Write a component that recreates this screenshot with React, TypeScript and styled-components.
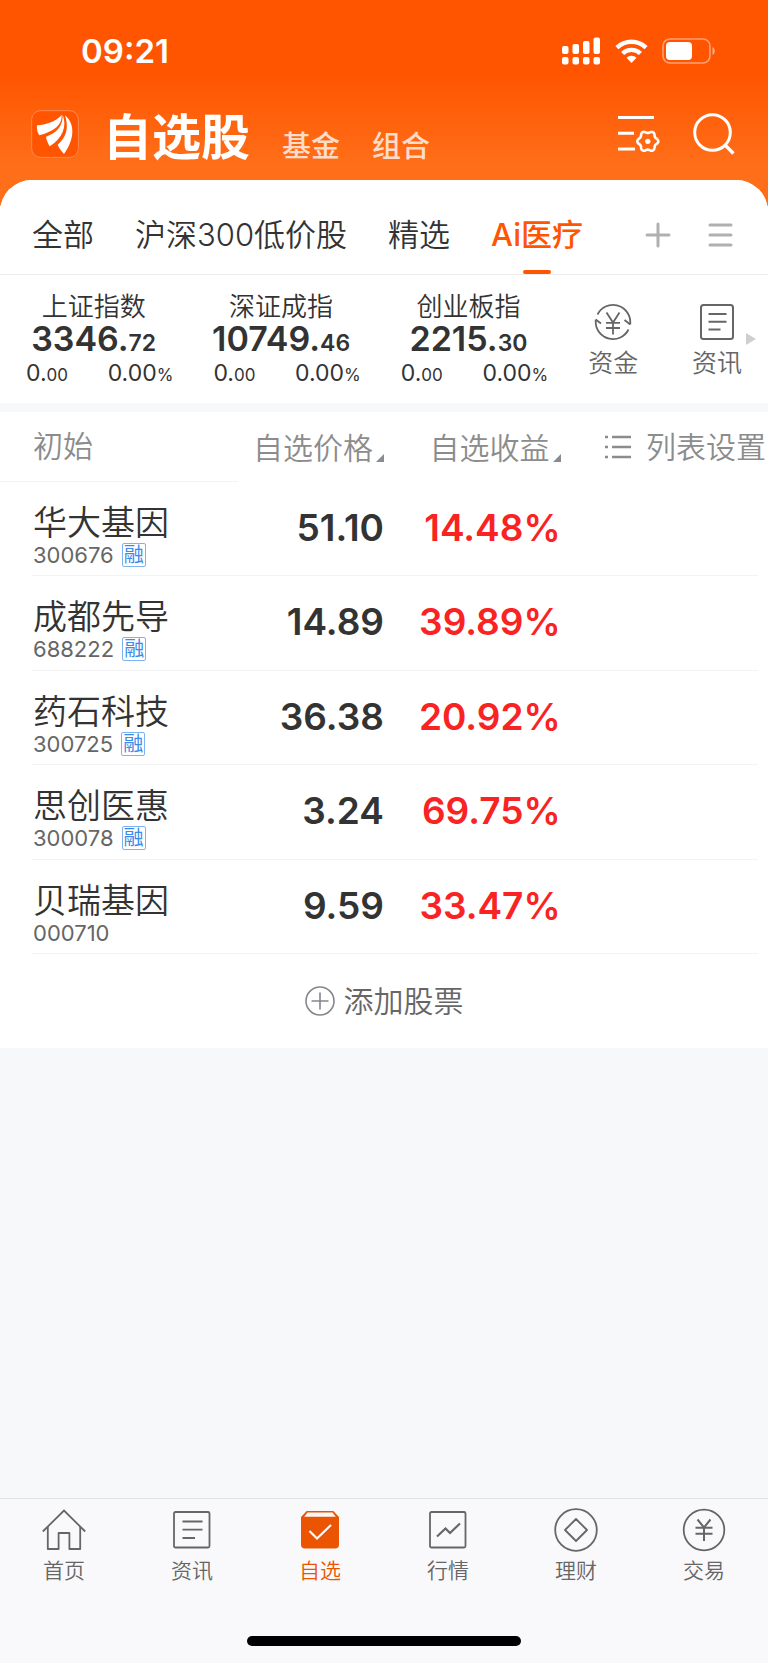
import React from "react";
import styled, { createGlobalStyle, css } from "styled-components";

const color = {
  brand: "#ff5500",
  ink: "#333333",
  muted: "#666666",
  faint: "#8c8c8c",
  rise: "#fa2323",
  page: "#f7f8fa",
  line: "#f3f3f5",
};

const GlobalStyle = createGlobalStyle`
  * { box-sizing: border-box; }
  body {
    margin: 0;
    background: ${color.page};
    color: ${color.ink};
    font-family: Inter, "Noto Sans CJK SC", sans-serif;
  }
  button {
    margin: 0;
    padding: 0;
    border: 0;
    background: none;
    color: inherit;
    font: inherit;
    cursor: pointer;
  }
  a { color: inherit; text-decoration: none; }
  svg { display: block; flex: none; }
`;

const Screen = styled.div`
  display: flex;
  flex-direction: column;
  min-height: 100vh;
`;

const Top = styled.header`
  padding-bottom: 40px;
  background: linear-gradient(${color.brand} 0, ${color.brand} 74px, #ff6f1a 168px);
`;

const StatusBar = styled.div`
  display: flex;
  align-items: center;
  height: 102px;
  padding: 0 52px 0 81px;
  color: #fff;
`;

const Clock = styled.time`
  flex: 1;
  font-size: 33px;
  font-weight: 600;
  line-height: 40px;
`;

const StatusIcons = styled.div`
  display: flex;
  align-items: center;
  gap: 14px;
`;

const TitleBar = styled.div`
  display: flex;
  align-items: center;
  height: 64px;
  padding: 0 33px 0 31px;
  color: #fff;
`;

const Sections = styled.nav`
  display: flex;
  flex: 1;
  align-items: flex-end;
  gap: 32px;
  margin-left: 24px;
  padding-top: 8px;
`;

const SectionLink = styled.a<{ $main?: boolean }>`
  font-size: ${(p) => (p.$main ? 49 : 29)}px;
  font-weight: ${(p) => (p.$main ? 700 : 500)};
  line-height: ${(p) => (p.$main ? 64 : 46)}px;
  color: ${(p) => (p.$main ? "#fff" : "#ffdcc8")};
`;

const Tools = styled.div`
  display: flex;
  align-items: center;
  gap: 33px;
`;

const Sheet = styled.main`
  flex: 1;
  margin-top: -26px;
  border-radius: 32px 32px 0 0;
  background: ${color.page};
`;

const GroupBar = styled.div`
  display: flex;
  align-items: center;
  height: 95px;
  padding: 0 35px 0 32px;
  border-bottom: 1px solid #ececee;
  border-radius: 32px 32px 0 0;
  background: #fff;
`;

const Groups = styled.div`
  display: flex;
  flex: 1;
  gap: 41px;
  height: 94px;
`;

const GroupTab = styled.button<{ $active?: boolean }>`
  position: relative;
  padding-top: 16px;
  font-size: 31px;
  font-weight: 350;
  line-height: 44px;
  white-space: nowrap;
  ${(p) =>
    p.$active &&
    css`
      color: ${color.brand};
      font-weight: 500;
      &::after {
        content: "";
        position: absolute;
        bottom: 0;
        left: calc(50% - 14px);
        width: 28px;
        height: 4px;
        border-radius: 2px;
        background: ${color.brand};
      }
    `}
`;

const GroupTools = styled.div`
  display: flex;
  align-items: center;
  gap: 36px;
  padding-top: 16px;
  color: #b0b0b0;
`;

const Indices = styled.section`
  display: flex;
  height: 128px;
  background: #fff;
`;

const Index = styled.a`
  flex: none;
  width: 24.4%;
  padding-top: 16px;
  text-align: center;
  white-space: nowrap;
`;

const IndexName = styled.div`
  font-size: 26px;
  font-weight: 350;
  line-height: 32px;
`;

const IndexValue = styled.div`
  font-size: 34px;
  font-weight: 600;
  line-height: 32px;
  small { font-size: 23px; }
`;

const IndexChange = styled.div`
  display: flex;
  justify-content: space-between;
  padding: 0 14px 0 26px;
  font-size: 23px;
  line-height: 28px;
  small { font-size: 17px; }
`;

const Shortcuts = styled.div`
  display: flex;
  flex: 1;
  align-items: center;
  justify-content: space-between;
  padding: 4px 12px 0 26px;
`;

const Shortcut = styled.a`
  display: flex;
  flex-direction: column;
  align-items: center;
  gap: 5px;
  color: ${color.muted};
  font-size: 25px;
  font-weight: 350;
  line-height: 34px;
`;

const ShortcutGroup = styled.div`
  display: flex;
  align-items: center;
  gap: 4px;
`;

const Holdings = styled.table`
  width: 100%;
  height: 542px;
  margin-top: 9px;
  border-collapse: collapse;
  table-layout: fixed;
  background: #fff;
`;

const HeadRow = styled.tr`
  height: 69px;
`;

const HeadCell = styled.th<{ $width: string; $align?: string; $rule?: boolean }>`
  width: ${(p) => p.$width};
  padding: 0;
  border-bottom: ${(p) => (p.$rule ? `1px solid ${color.line}` : "0")};
  color: ${color.faint};
  font-size: 30px;
  font-weight: 350;
  line-height: 40px;
  text-align: ${(p) => p.$align ?? "right"};
  white-space: nowrap;
  &:first-child { padding-left: 33px; }
`;

const SortButton = styled.button`
  display: inline-flex;
  align-items: center;
  gap: 3px;
  padding-top: 2px;
  svg { align-self: flex-end; margin-bottom: 6px; }
`;

const SettingsButton = styled.button`
  display: inline-flex;
  align-items: center;
  gap: 15px;
  padding: 2px 2px 0 0;
`;

const StockRow = styled.tr`
  background: linear-gradient(${color.line}, ${color.line}) no-repeat 32px 100% / calc(100% - 42px) 1px;
`;

const NameCell = styled.th`
  padding: 12px 0 0 33px;
  font-weight: 400;
  text-align: left;
`;

const StockName = styled.div`
  font-size: 34px;
  font-weight: 350;
  line-height: 40px;
`;

const StockMeta = styled.div`
  display: flex;
  align-items: center;
  gap: 8px;
  height: 24px;
  color: ${color.muted};
  font-size: 22px;
  line-height: 24px;
`;

const MarginTag = styled.span`
  width: 24px;
  height: 24px;
  border: 1px solid #7fb2f0;
  border-radius: 2px;
  color: #3a8bea;
  font-size: 20px;
  line-height: 22px;
  text-align: center;
`;

const NumberCell = styled.td<{ $rise?: boolean }>`
  padding: 0 0 2px;
  color: ${(p) => (p.$rise ? color.rise : color.ink)};
  font-size: 37px;
  font-weight: 600;
  line-height: 44px;
  text-align: right;
`;

const AddButton = styled.button`
  display: flex;
  align-items: center;
  justify-content: center;
  gap: 9px;
  width: 100%;
  height: 94px;
  background: #fff;
  color: ${color.muted};
  font-size: 30px;
  font-weight: 350;
  line-height: 40px;
`;

const BottomBar = styled.footer`
  border-top: 1px solid #e2e2e5;
  background: #f9f9fb;
`;

const BottomTabs = styled.nav`
  display: flex;
  height: 137px;
  padding-top: 9px;
`;

const BottomTab = styled.a<{ $active?: boolean }>`
  display: flex;
  flex: 1;
  flex-direction: column;
  align-items: center;
  gap: 4px;
  color: ${(p) => (p.$active ? "#eb5502" : color.muted)};
  font-size: 21px;
  font-weight: 350;
  line-height: 30px;
`;

const HomeIndicator = styled.div`
  width: 274px;
  height: 10px;
  margin: 0 auto 17px;
  border-radius: 5px;
  background: #000;
`;

const Signal = () => (
  <svg width="39" height="28" viewBox="0 0 39 28" fill="#fff" aria-hidden="true">
    <rect x="0" y="9" width="6.5" height="8" rx="2" />
    <rect x="10.5" y="7" width="6.5" height="10" rx="2" />
    <rect x="21" y="4" width="6.5" height="13" rx="2" />
    <rect x="31.5" y="0.5" width="6.5" height="16.5" rx="2" />
    {[0, 10.5, 21, 31.5].map((x) => (
      <rect key={x} x={x} y="20" width="6.5" height="7.5" rx="2" />
    ))}
  </svg>
);

const Wifi = () => (
  <svg width="33" height="24" viewBox="0 0 33 24" fill="none" stroke="#fff" strokeWidth="4.4" aria-hidden="true">
    <path d="M1.9 8.6a21 21 0 0 1 29.2 0" />
    <path d="M7.6 14.5a12.8 12.8 0 0 1 17.8 0" />
    <path d="M16.5 24l-5-5.2a7.2 7.2 0 0 1 10 0z" fill="#fff" stroke="none" />
  </svg>
);

const Battery = () => (
  <svg width="54" height="26" viewBox="0 0 54 26" aria-hidden="true">
    <rect x="1" y="1" width="47" height="24" rx="7" fill="none" stroke="#fff" strokeOpacity=".45" strokeWidth="1.6" />
    <rect x="4" y="4" width="26" height="18" rx="4" fill="#fff" />
    <path d="M50.5 9c3 1.5 3 6.5 0 8z" fill="#fff" fillOpacity=".5" />
  </svg>
);

const Logo = () => (
  <svg width="48" height="48" viewBox="0 0 144 144" aria-label="东方财富">
    <rect x="2" y="2" width="140" height="140" rx="26" fill="#ff5500" stroke="#ff8a50" strokeWidth="3" />
    <g fill="#fff">
      <path d="M18 46C46 44 72 36 92 15C93 46 70 63 25 76C18 66 17 56 18 46Z" />
      <path d="M95 14C109 50 94 84 56 109C50 98 46 89 45 80C78 68 96 47 95 14Z" />
      <path d="M102 16C133 42 131 88 99 132C91 122 84 115 80 104C107 82 114 52 102 16Z" />
    </g>
  </svg>
);

const gearOutline =
  Array.from({ length: 72 }, (_, i) => {
    const a = (i * Math.PI) / 36;
    const r = 9.4 + 1.1 * Math.cos(6 * a);
    return `${i ? "L" : "M"}${(29.8 + r * Math.cos(a)).toFixed(2)} ${(26.3 + r * Math.sin(a)).toFixed(2)}`;
  }).join("") + "Z";

const FilterSettings = () => (
  <svg width="42" height="38" viewBox="0 0 42 38" fill="none" stroke="#fff" strokeWidth="3" aria-hidden="true">
    <path d="M0 2.500h36M0 18.200h16M0 34h17" />
    <path d={gearOutline} strokeLinejoin="round" strokeWidth="2.600" />
    <circle cx="29.800" cy="26.300" r="2.600" fill="#fff" stroke="none" />
  </svg>
);

const Search = () => (
  <svg width="42" height="42" viewBox="0 0 42 42" fill="none" stroke="#fff" strokeWidth="3" aria-hidden="true">
    <circle cx="19.500" cy="19.500" r="17.800" />
    <path d="M32 32l8.500 8.500" strokeWidth="3.200" />
  </svg>
);

const Plus = () => (
  <svg width="26" height="26" viewBox="0 0 26 26" fill="none" stroke="currentColor" strokeWidth="3" strokeLinecap="round" aria-hidden="true">
    <path d="M13 2v22M2 13h22" />
  </svg>
);

const Menu = () => (
  <svg width="26" height="26" viewBox="0 0 26 26" fill="none" stroke="currentColor" strokeWidth="3" strokeLinecap="round" aria-hidden="true">
    <path d="M3 3h21M3 13h21M3 23h21" />
  </svg>
);

const Funds = () => (
  <svg width="38" height="38" viewBox="0 0 38 38" fill="none" stroke="currentColor" strokeWidth="1.800" aria-hidden="true">
    <path d="M3.500 11.500A17.300 17.300 0 0 1 36.300 19v2.500M36.300 21.500L30.500 17M34.500 26.500A17.300 17.300 0 0 1 1.700 19v-2.500M1.700 16.500L7 20.500" />
    <path d="M12.500 9.500l6.500 10 6.500-10M12 19.800h14M12 25h14M19 19.500v12" />
  </svg>
);

const News = () => (
  <svg width="38" height="38" viewBox="0 0 38 38" fill="none" stroke="currentColor" strokeWidth="2" aria-hidden="true">
    <rect x="3" y="2" width="32" height="34" rx="2.500" />
    <path d="M10.500 11h18M10.500 18.800h18M10.500 26.500h12" />
  </svg>
);

const MoreArrow = () => (
  <svg width="10" height="18" viewBox="0 0 10 18" fill="#cfcfcf" aria-hidden="true">
    <path d="M0 1l10 6-10 6z" />
  </svg>
);

const SortMark = () => (
  <svg width="8" height="8" viewBox="0 0 8 8" fill="#8a8a92" aria-hidden="true">
    <path d="M8 0v8H0z" />
  </svg>
);

const List = () => (
  <svg width="26" height="26" viewBox="0 0 26 26" fill="none" stroke="currentColor" strokeWidth="2.600" aria-hidden="true">
    <path d="M0 3h3M7 3h19M0 13h3M7 13h19M0 23h3M7 23h19" />
  </svg>
);

const AddCircle = () => (
  <svg width="30" height="30" viewBox="0 0 30 30" fill="none" stroke="#85858c" strokeWidth="1.600" aria-hidden="true">
    <circle cx="15" cy="15" r="14" />
    <path d="M15 6.500v17M6.500 15h17" />
  </svg>
);

const tabIcon = {
  width: 44,
  height: 44,
  viewBox: "0 0 44 44",
  fill: "none",
  stroke: "currentColor",
  strokeWidth: 1.8,
  "aria-hidden": true,
} as const;

const HomeIcon = () => (
  <svg {...tabIcon}>
    <path d="M.800 23.500L22 2.500l21.200 21" />
    <path d="M5.800 19v22h10.800V25h10.800v16h10.800V19" strokeLinejoin="round" />
  </svg>
);

const NewsIcon = () => (
  <svg {...tabIcon}>
    <rect x="4" y="4" width="35.500" height="35.500" rx="1.500" />
    <path d="M12.500 13.500h20M12.500 21.700h20M12.500 30h12.500" />
  </svg>
);

const WatchIcon = () => (
  <svg {...tabIcon}>
    <path d="M8.600 3h26.800l5.600 6v27.500a4 4 0 0 1-4 4H7a4 4 0 0 1-4-4V9z" fill="currentColor" stroke="none" />
    <path d="M9.600 4.600h24.800l3.400 4.200H6.200z" fill="#f9f9fb" stroke="none" />
    <path d="M11.500 23l7.500 7.500L33 17" stroke="#f9f9fb" strokeWidth="2.200" />
  </svg>
);

const MarketIcon = () => (
  <svg {...tabIcon}>
    <rect x="4" y="4" width="35.500" height="35.500" rx="1.500" />
    <path d="M11 28.500l8.500-8 4.500 4.500 10-9.500" strokeWidth="2.200" />
  </svg>
);

const WealthIcon = () => (
  <svg {...tabIcon}>
    <circle cx="22" cy="22" r="20.800" />
    <path d="M22 11l11 11-11 11-11-11z" strokeLinejoin="round" />
  </svg>
);

const TradeIcon = () => (
  <svg {...tabIcon}>
    <circle cx="22" cy="22" r="20.300" />
    <path d="M15.500 11.500l6.500 8 6.500-8M13.500 19.700h17M13.500 25.700h17M22 19.500v13.500" strokeWidth="2" />
  </svg>
);

const groups = ["全部", "沪深300低价股", "精选", "Ai医疗"];

const indices = [
  { name: "上证指数", whole: "3346", part: "72" },
  { name: "深证成指", whole: "10749", part: "46" },
  { name: "创业板指", whole: "2215", part: "30" },
];

const stocks = [
  { name: "华大基因", code: "300676", margin: true, price: "51.10", gain: "14.48%" },
  { name: "成都先导", code: "688222", margin: true, price: "14.89", gain: "39.89%" },
  { name: "药石科技", code: "300725", margin: true, price: "36.38", gain: "20.92%" },
  { name: "思创医惠", code: "300078", margin: true, price: "3.24", gain: "69.75%" },
  { name: "贝瑞基因", code: "000710", margin: false, price: "9.59", gain: "33.47%" },
];

const tabs = [
  { label: "首页", Icon: HomeIcon },
  { label: "资讯", Icon: NewsIcon },
  { label: "自选", Icon: WatchIcon },
  { label: "行情", Icon: MarketIcon },
  { label: "理财", Icon: WealthIcon },
  { label: "交易", Icon: TradeIcon },
];

export default function App() {
  return (
    <Screen>
      <GlobalStyle />
      <Top>
        <StatusBar>
          <Clock>09:21</Clock>
          <StatusIcons>
            <Signal />
            <Wifi />
            <Battery />
          </StatusIcons>
        </StatusBar>
        <TitleBar>
          <Logo />
          <Sections>
            <SectionLink href="#watchlist" $main>自选股</SectionLink>
            <SectionLink href="#funds">基金</SectionLink>
            <SectionLink href="#portfolio">组合</SectionLink>
          </Sections>
          <Tools>
            <button aria-label="设置"><FilterSettings /></button>
            <button aria-label="搜索"><Search /></button>
          </Tools>
        </TitleBar>
      </Top>

      <Sheet>
        <GroupBar>
          <Groups>
            {groups.map((g) => (
              <GroupTab key={g} $active={g === "Ai医疗"}>{g}</GroupTab>
            ))}
          </Groups>
          <GroupTools>
            <button aria-label="添加分组"><Plus /></button>
            <button aria-label="管理分组"><Menu /></button>
          </GroupTools>
        </GroupBar>

        <Indices>
          {indices.map((i) => (
            <Index key={i.name} href="#index">
              <IndexName>{i.name}</IndexName>
              <IndexValue>{i.whole}.<small>{i.part}</small></IndexValue>
              <IndexChange>
                <span>0.<small>00</small></span>
                <span>0.00<small>%</small></span>
              </IndexChange>
            </Index>
          ))}
          <Shortcuts>
            <Shortcut href="#capital"><Funds />资金</Shortcut>
            <ShortcutGroup>
              <Shortcut href="#news"><News />资讯</Shortcut>
              <MoreArrow />
            </ShortcutGroup>
          </Shortcuts>
        </Indices>

        <Holdings>
          <thead>
            <HeadRow>
              <HeadCell $width="31%" $align="left" $rule>初始</HeadCell>
              <HeadCell $width="19%"><SortButton>自选价格<SortMark /></SortButton></HeadCell>
              <HeadCell $width="23%"><SortButton>自选收益<SortMark /></SortButton></HeadCell>
              <HeadCell $width="27%"><SettingsButton><List />列表设置</SettingsButton></HeadCell>
            </HeadRow>
          </thead>
          <tbody>
            {stocks.map((s) => (
              <StockRow key={s.code}>
                <NameCell scope="row">
                  <StockName>{s.name}</StockName>
                  <StockMeta>
                    {s.code}
                    {s.margin && <MarginTag>融</MarginTag>}
                  </StockMeta>
                </NameCell>
                <NumberCell>{s.price}</NumberCell>
                <NumberCell $rise>{s.gain}</NumberCell>
                <td />
              </StockRow>
            ))}
          </tbody>
        </Holdings>
        <AddButton><AddCircle />添加股票</AddButton>
      </Sheet>

      <BottomBar>
        <BottomTabs>
          {tabs.map(({ label, Icon }) => (
            <BottomTab key={label} href="#tab" $active={label === "自选"}>
              <Icon />
              {label}
            </BottomTab>
          ))}
        </BottomTabs>
        <HomeIndicator />
      </BottomBar>
    </Screen>
  );
}
